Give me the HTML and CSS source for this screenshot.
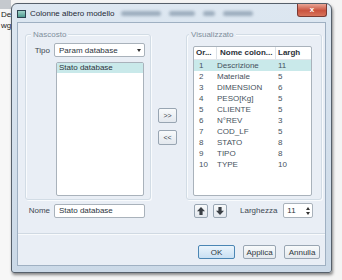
FILE: index.html
```html
<!DOCTYPE html>
<html>
<head>
<meta charset="utf-8">
<link rel="stylesheet" href="styles.css">
</head>
<body>
<div class="desk">
  <div class="bgwin">
    <div class="bgwin-bar"></div>
    <div class="bgwin-line">Des</div>
    <div class="bgwin-line">wg</div>
  </div>
  <div class="dialog">
    <div class="titlebar">
      <span class="ticon"></span>
      <span class="ttext">Colonne albero modello</span>
      <span class="smudges">
        <span class="smudge s1"></span>
        <span class="smudge s2"></span>
        <span class="smudge s3"></span>
        <span class="smudge s4"></span>
      </span>
      <span class="close">x</span>
    </div>
    <div class="client">
      <div class="panels">
        <div class="gb gb-left">
          <div class="gb-title">Nascosto</div>
          <div class="field-row">
            <span class="label">Tipo</span>
            <div class="combo"><span>Param database</span><span class="caret"></span></div>
          </div>
          <div class="list">
            <div class="list-item sel">Stato database</div>
          </div>
        </div>
        <div class="mid">
          <div class="btn small">&gt;&gt;</div>
          <div class="btn small">&lt;&lt;</div>
        </div>
        <div class="gb gb-right">
          <div class="gb-title">Visualizzato</div>
          <div class="table">
            <div class="thead">
              <div class="th c1">Or...</div>
              <div class="th c2">Nome colon...</div>
              <div class="th c3">Largh</div>
            </div>
            <div class="tr sel"><div class="td c1">1</div><div class="td c2">Descrizione</div><div class="td c3">11</div></div>
            <div class="tr"><div class="td c1">2</div><div class="td c2">Materiale</div><div class="td c3">5</div></div>
            <div class="tr"><div class="td c1">3</div><div class="td c2">DIMENSION</div><div class="td c3">6</div></div>
            <div class="tr"><div class="td c1">4</div><div class="td c2">PESO[Kg]</div><div class="td c3">5</div></div>
            <div class="tr"><div class="td c1">5</div><div class="td c2">CLIENTE</div><div class="td c3">5</div></div>
            <div class="tr"><div class="td c1">6</div><div class="td c2">N°REV</div><div class="td c3">3</div></div>
            <div class="tr"><div class="td c1">7</div><div class="td c2">COD_LF</div><div class="td c3">5</div></div>
            <div class="tr"><div class="td c1">8</div><div class="td c2">STATO</div><div class="td c3">8</div></div>
            <div class="tr"><div class="td c1">9</div><div class="td c2">TIPO</div><div class="td c3">8</div></div>
            <div class="tr"><div class="td c1">10</div><div class="td c2">TYPE</div><div class="td c3">10</div></div>
          </div>
        </div>
      </div>
      <div class="under">
        <div class="under-left">
          <span class="label">Nome</span>
          <div class="textbox">Stato database</div>
        </div>
        <div class="under-right">
          <div class="btn icon">
            <svg width="8" height="8" viewBox="0 0 8 8"><path d="M4 0 L8 4.2 H5.6 V8 H2.4 V4.2 H0 Z" fill="#3a3f45"/></svg>
          </div>
          <div class="btn icon">
            <svg width="8" height="8" viewBox="0 0 8 8"><path d="M4 8 L8 3.8 H5.6 V0 H2.4 V3.8 H0 Z" fill="#3a3f45"/></svg>
          </div>
          <span class="label wlabel">Larghezza</span>
          <div class="spinner">
            <span class="spin-val">11</span>
            <span class="spin-arrows">
              <span class="up"></span>
              <span class="down"></span>
            </span>
          </div>
        </div>
      </div>
      <div class="separator"></div>
      <div class="actions">
        <div class="btn action default">OK</div>
        <div class="btn action w-applica">Applica</div>
        <div class="btn action w-annulla">Annulla</div>
      </div>
    </div>
  </div>
</div>
</body>
</html>
```
FILE: styles.css
```css
* { box-sizing: border-box; }
html, body { margin: 0; padding: 0; }
body {
  width: 342px;
  height: 280px;
  overflow: hidden;
  background: #f4f4f4;
  font-family: "Liberation Sans", Arial, sans-serif;
  font-size: 8px;
  color: #333c45;
}
.desk { display: flex; align-items: flex-start; height: 280px; }

/* background window on the left */
.bgwin { flex: none; width: 11px; height: 280px; overflow: hidden; background: #f7f7f7; }
.bgwin-bar { height: 9px; background: #c5c9ce; }
.bgwin-line { white-space: nowrap; line-height: 11px; color: #222; padding-left: 1px; font-size: 8px; }

/* dialog window */
.dialog {
  flex: none;
  margin-top: 3px;
  width: 321px;
  height: 270px;
  border: 1px solid #56606b;
  border-radius: 6px 6px 3px 3px;
  background: linear-gradient(#dde7f1, #cbd9e7);
  box-shadow: 1px 2px 3px rgba(0,0,0,.45);
  padding: 0 5px 6px;
  display: flex;
  flex-direction: column;
}
.titlebar { height: 18px; flex: none; display: flex; align-items: center; }
.ticon {
  width: 9px; height: 8px;
  border: 1px solid #2d4250;
  background: linear-gradient(#9fd3c8, #4f9a90);
  margin-top: 1px;
}
.ttext { margin-left: 4px; color: #1e2a36; font-size: 8px; }
.smudges { display: flex; align-items: center; margin-left: 6px; gap: 8px; }
.smudge { display: block; height: 5px; border-radius: 3px; background: #8295a8; filter: blur(1.5px); opacity: .7; }
.s1 { width: 40px; }
.s2 { width: 26px; }
.s3 { width: 12px; }
.s4 { width: 30px; }
.close {
  margin-left: auto;
  margin-right: -1px;
  align-self: flex-start;
  width: 30px;
  height: 13px;
  border: 1px solid #7a3a33;
  border-top: none;
  border-radius: 0 0 3px 3px;
  background: linear-gradient(#e9a595, #c9533f 55%, #d8745c);
  color: #fff;
  font-weight: bold;
  font-size: 8px;
  text-align: center;
  line-height: 11px;
}

/* client */
.client {
  flex: none;
  height: 244px;
  border: 1px solid #9fb0c2;
  background: #e9eef5;
  display: flex;
  flex-direction: column;
}
.panels { display: flex; margin-top: 11px; padding-left: 7px; height: 177px; flex: none; }
.gb {
  flex: none;
  height: 166px;
  border: 1px solid #d2dce5;
  border-radius: 3px;
  box-shadow: inset 1px 1px 0 #f9fbfd, 1px 1px 0 #f9fbfd;
  display: flex;
  flex-direction: column;
}
.gb-left { width: 126px; }
.gb-right { width: 136px; }
.gb-title {
  align-self: flex-start;
  height: 9px;
  line-height: 9px;
  margin-top: -5px;
  padding: 0 2px;
  background: #e9eef5;
  color: #7f8e9c;
}
.gb-left .gb-title { margin-left: 5px; }
.gb-right .gb-title { margin-left: 2px; }

.field-row { display: flex; align-items: center; margin-top: 4px; height: 14px; }
.label { color: #3e4852; }
.field-row .label { width: 24px; text-align: right; margin-right: 4px; }
.combo {
  width: 91px; height: 14px;
  border: 1px solid #a9b2bb;
  border-radius: 2px;
  background: #fff;
  padding-left: 4px;
  display: flex;
  align-items: center;
  color: #2c343c;
}
.caret {
  margin-left: auto; margin-right: 3px;
  width: 0; height: 0;
  border-left: 2px solid transparent;
  border-right: 2px solid transparent;
  border-top: 3px solid #333;
}
.list {
  margin-top: 5px;
  margin-left: 30px;
  width: 88px;
  height: 134px;
  border: 1px solid #a9b2bb;
  border-radius: 2px;
  background: #fff;
}
.list-item { height: 10px; line-height: 10px; padding-left: 2px; color: #2c343c; }
.sel { background: #c9e9ea; }

.mid { flex: none; width: 35px; display: flex; flex-direction: column; padding-left: 7px; padding-top: 74px; gap: 7px; }
.btn {
  border: 1px solid #98a5b2;
  border-radius: 2px;
  background: linear-gradient(#f8fafb, #e3e8ee);
  color: #3a434c;
  display: flex;
  align-items: center;
  justify-content: center;
}
.btn.small { width: 19px; height: 15px; font-size: 7px; }

.table {
  margin-top: 7px;
  margin-left: 6px;
  width: 119px;
  height: 150px;
  border: 1px solid #a9b2bb;
  border-radius: 2px;
  background: #fff;
}
.thead, .tr { display: grid; grid-template-columns: 23px 59px 1fr; }
.thead { height: 13px; border-bottom: 1px solid #e1e6ea; }
.th { line-height: 12px; font-weight: bold; color: #2a3138; white-space: nowrap; overflow: hidden; }
.th.c1, .th.c2 { border-right: 1px solid #dce2e7; }
.th.c1 { padding-left: 2px; }
.th.c2 { padding-left: 3px; }
.th.c3 { padding-left: 2px; }
.tr { height: 11px; }
.td { line-height: 11px; color: #46525d; white-space: nowrap; }
.td.c1 { padding-left: 5px; }
.td.c2 { padding-left: 0; }
.td.c3 { padding-left: 2px; }

.under { display: flex; margin-top: -8px; height: 15px; flex: none; }
.under-left { width: 168px; padding-left: 7px; display: flex; align-items: center; }
.under-left .label { width: 25px; text-align: right; margin-right: 4px; }
.textbox {
  width: 91px; height: 14px;
  border: 1px solid #a9b2bb;
  border-radius: 2px;
  background: #fff;
  padding-left: 4px;
  line-height: 12px;
  color: #2c343c;
}
.under-right { display: flex; align-items: center; padding-left: 8px; }
.btn.icon { width: 14px; height: 14px; margin-right: 5px; }
.wlabel { margin-left: 8px; margin-right: 6px; }
.spinner {
  width: 30px; height: 15px;
  border: 1px solid #a9b2bb;
  border-radius: 2px;
  background: #fff;
  display: flex;
  align-items: center;
  padding-left: 3px;
}
.spin-val { color: #2c343c; }
.spin-arrows { margin-left: auto; margin-right: 2px; display: flex; flex-direction: column; gap: 2px; }
.spin-arrows .up { width: 0; height: 0; border-left: 2px solid transparent; border-right: 2px solid transparent; border-bottom: 3px solid #333; }
.spin-arrows .down { width: 0; height: 0; border-left: 2px solid transparent; border-right: 2px solid transparent; border-top: 3px solid #333; }

.separator { margin-top: 15px; height: 2px; border-top: 1px solid #d0d9e2; border-bottom: 1px solid #f8fafc; flex: none; }
.actions { display: flex; justify-content: flex-end; gap: 8px; padding-right: 5px; margin-top: 10px; }
.btn.action { height: 14px; width: 37px; font-size: 8px; color: #2e3740; }
.btn.action.w-applica { width: 33px; }
.btn.action.w-annulla { width: 36px; }
.btn.default { border-color: #4b86b4; background: linear-gradient(#eaf4fc, #c9e0f3); }
```
